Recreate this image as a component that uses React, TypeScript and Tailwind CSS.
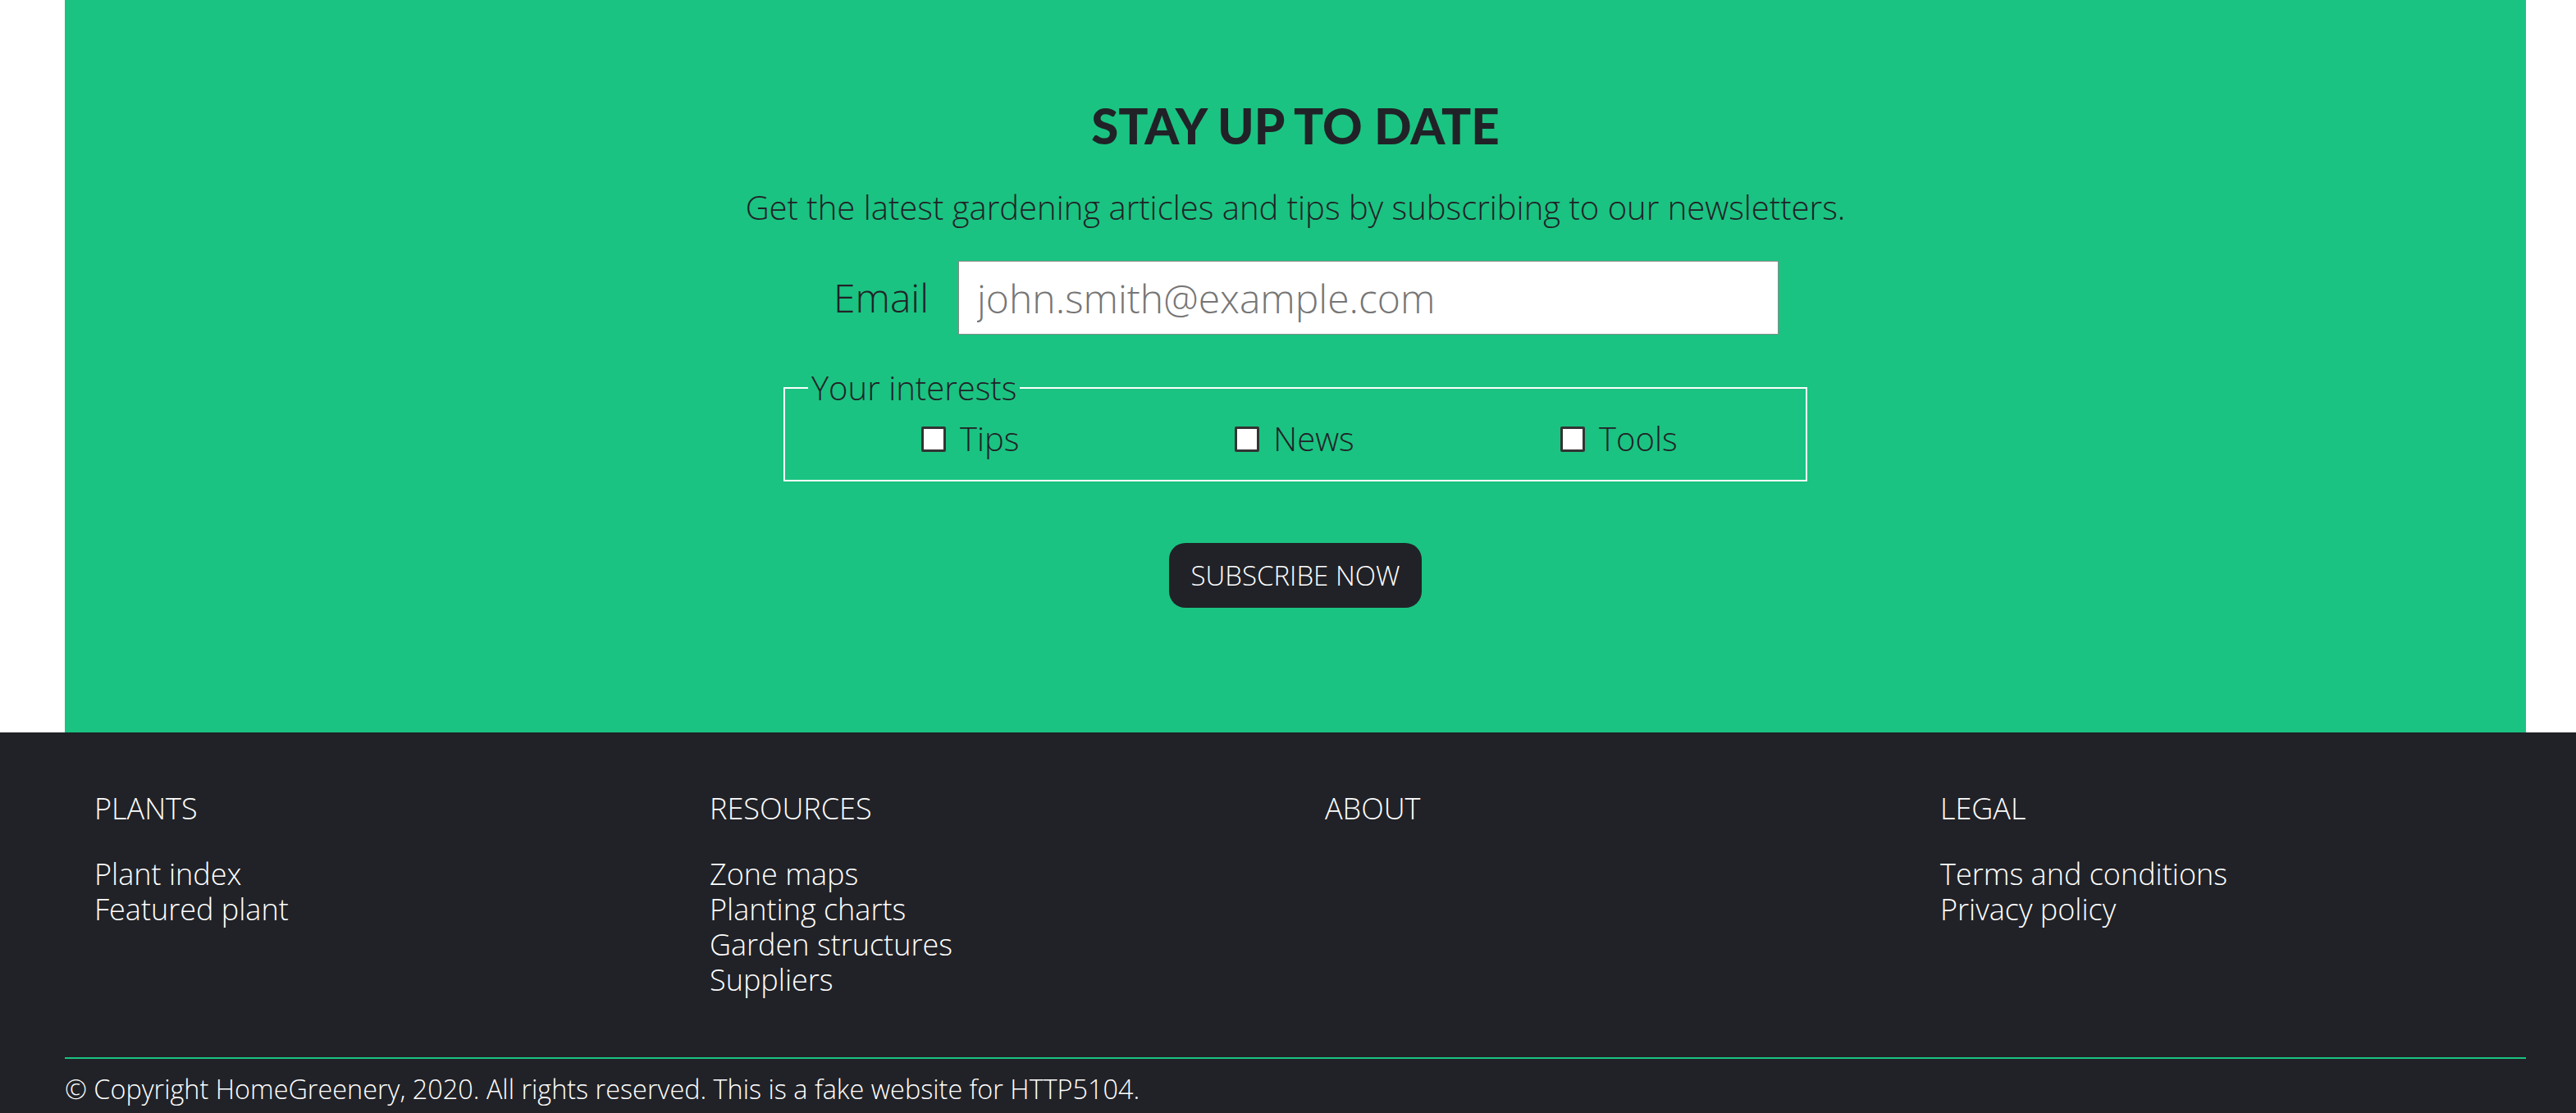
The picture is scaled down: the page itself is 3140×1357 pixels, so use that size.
const green = "bg-[#1ac381]";

const footerCols = [
  { title: "PLANTS", links: ["Plant index", "Featured plant"] },
  { title: "RESOURCES", links: ["Zone maps", "Planting charts", "Garden structures", "Suppliers"] },
  { title: "ABOUT", links: [] as string[] },
  { title: "LEGAL", links: ["Terms and conditions", "Privacy policy"] },
];

const interests = ["Tips", "News", "Tools"];

export default function App() {
  return (
    <div className="min-h-screen bg-white font-['Open_Sans',sans-serif] font-light">
      {/* newsletter */}
      <section className={`${green} ml-[79px] w-[3000px] pt-[117px] pb-[152px] flex flex-col items-center text-[#212227]`}>
        <h2 className="font-['Lato',sans-serif] font-black text-[60px] leading-[72px]">STAY UP TO DATE</h2>
        <p className="mt-[38px] text-[40px] leading-[52px]">
          Get the latest gardening articles and tips by subscribing to our newsletters.
        </p>

        <form className="flex flex-col items-center" onSubmit={(e) => e.preventDefault()}>
          <div className="mt-[39px] flex items-center pl-[26px]">
            <label htmlFor="email" className="text-[48px] leading-[60px] mr-[36px]">
              Email
            </label>
            <input
              id="email"
              type="email"
              placeholder="john.smith@example.com"
              className="w-[1000px] h-[90px] bg-white border border-[#8a8a8a] pl-[22px] text-[48px] font-light placeholder:text-[#767676] outline-none"
            />
          </div>

          <fieldset className="mt-[38px] w-[1248px] border-2 border-white pl-[28px] pr-[30px] pt-[8px] pb-[23px]">
            <legend className="px-[4px] text-[40px] leading-[54px]">Your interests</legend>
            <div className="grid grid-cols-3">
              {interests.map((name) => (
                <label key={name} className="flex items-center justify-center gap-[17px] text-[40px] leading-[54px]">
                  <input
                    type="checkbox"
                    className="appearance-none w-[30px] h-[31px] bg-white border-[3px] border-[#333333] rounded-[2px]"
                  />
                  {name}
                </label>
              ))}
            </div>
          </fieldset>

          <button
            type="submit"
            className="mt-[75px] h-[79px] px-[27px] rounded-[20px] bg-[#212227] text-white text-[33px] font-light"
          >
            SUBSCRIBE NOW
          </button>
        </form>
      </section>

      {/* footer */}
      <footer className="bg-[#212227] text-white pt-[71px] pb-[8px]">
        <div className="ml-[79px] w-[3000px]">
          <div className="grid grid-cols-4">
            {footerCols.map((col) => (
              <div key={col.title} className="pl-[36px]">
                <h3 className="text-[36px] leading-[43px]">{col.title}</h3>
                <ul className="mt-[37px]">
                  {col.links.map((l) => (
                    <li key={l} className="text-[36px] leading-[43px]">
                      <a href="#">{l}</a>
                    </li>
                  ))}
                </ul>
              </div>
            ))}
          </div>
          <div className={`mt-[73px] h-[2px] ${green}`} />
          <p className="mt-[14px] text-[32.4px] leading-[44px]">
            © Copyright HomeGreenery, 2020. All rights reserved. This is a fake website for HTTP5104.
          </p>
        </div>
      </footer>
    </div>
  );
}
